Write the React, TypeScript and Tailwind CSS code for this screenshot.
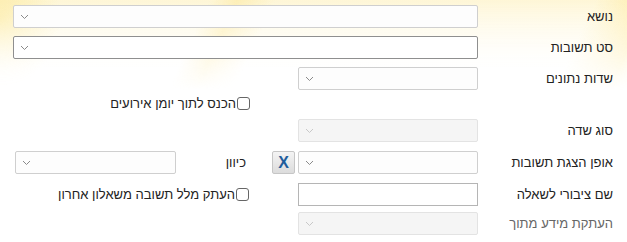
import React from "react";

const Chevron = ({ light = false }: { light?: boolean }) => (
  <svg width="9" height="6" viewBox="0 0 9 6" className="shrink-0">
    <path d="M1 1 L4.5 4.5 L8 1" fill="none" stroke={light ? "#c8c8c8" : "#8a8a8a"} strokeWidth="1" />
  </svg>
);

const Select = ({
  w,
  disabled = false,
  dark = false,
}: {
  w: string;
  disabled?: boolean;
  dark?: boolean;
}) => {
  const cls = disabled
    ? "border-[#e3e3e3] bg-[#f5f5f5]"
    : dark
    ? "border-[#8f8f8f] bg-white"
    : "border-[#cfcfcf] bg-[#fdfdfd]";
  return (
    <div className={`${w} h-[23px] border rounded-[2px] flex items-center justify-end pl-[6px] ${cls}`}>
      <Chevron light={disabled} />
    </div>
  );
};

const Label = ({ children, grey = false }: { children: React.ReactNode; grey?: boolean }) => (
  <div className={`w-[135px] shrink-0 text-[13px] ${grey ? "text-[#666666]" : "text-[#222222]"}`}>{children}</div>
);

const Check = ({ text }: { text: string }) => (
  <div className="flex items-center gap-0">
    <div className="w-[13px] h-[13px] border border-[#666] rounded-[3px] bg-white" />
    <span className="text-[13px] text-[#222222] mr-[1px]">{text}</span>
  </div>
);

export default function App() {
  return (
    <div
      dir="rtl"
      className="w-[627px] h-[242px] relative overflow-hidden bg-white"
      style={{ fontFamily: '"Liberation Sans", Arial, sans-serif' }}
    >
      <div className="absolute left-0 right-0 top-0 h-[90px] [mask-image:linear-gradient(to_bottom,black,transparent)]">
        <div className="absolute inset-0 bg-[linear-gradient(to_bottom,rgba(253,236,165,0.45),rgba(255,255,255,0)_70px)]" />
        <div className="absolute inset-0 bg-[linear-gradient(115deg,rgba(255,255,255,0)_0px,rgba(255,255,255,0)_190px,rgba(253,238,180,0.9)_215px,rgba(255,255,255,0)_250px,rgba(255,255,255,0)_540px,rgba(253,232,150,0.7)_590px,rgba(255,248,225,0.3)_615px,rgba(253,232,150,0.6)_640px)]" />
        <div className="absolute inset-0 bg-[radial-gradient(ellipse_60px_70px_at_0%_20%,rgba(252,232,150,0.7),rgba(255,255,255,0))]" />
      </div>
      <div className="relative pt-[5px] pr-[14px]">
        <div className="flex items-center h-[23px]">
          <Label>נושא</Label>
          <Select w="w-[465px]" />
        </div>
        <div className="flex items-center h-[23px] mt-[8px]">
          <Label>סט תשובות</Label>
          <Select w="w-[465px]" dark />
        </div>
        <div className="flex items-center h-[23px] mt-[8px]">
          <Label>שדות נתונים</Label>
          <Select w="w-[180px]" />
        </div>
        <div className="flex items-center h-[15px] mt-[6px] pr-[363px]">
          <Check text="הכנס לתוך יומן אירועים" />
        </div>
        <div className="flex items-center h-[23px] mt-[8px]">
          <Label>סוג שדה</Label>
          <Select w="w-[180px]" disabled />
        </div>
        <div className="flex items-center h-[23px] mt-[9px]">
          <Label>אופן הצגת תשובות</Label>
          <Select w="w-[180px]" />
          <div className="w-[23px] h-[23px] mr-[3px] border border-[#c6c6c6] rounded-[2px] bg-[linear-gradient(to_bottom,#f4f4f4,#dcdcdc)] flex items-center justify-center text-[16px] font-bold text-[#1f5d9c]">
            X
          </div>
          <div className="w-[60px] pr-[26px] text-[13px] text-[#222222] shrink-0">כיוון</div>
          <div className="mr-[36px]">
            <Select w="w-[161px]" />
          </div>
        </div>
        <div className="flex items-center h-[23px] mt-[9px]">
          <Label>שם ציבורי לשאלה</Label>
          <div className="w-[180px] h-[23px] border border-[#b5b5b5] bg-white" />
          <div className="mr-[49px]">
            <Check text="העתק מלל תשובה משאלון אחרון" />
          </div>
        </div>
        <div className="flex items-center h-[23px] mt-[6px]">
          <Label grey>העתקת מידע מתוך</Label>
          <Select w="w-[180px]" disabled />
        </div>
      </div>
    </div>
  );
}
